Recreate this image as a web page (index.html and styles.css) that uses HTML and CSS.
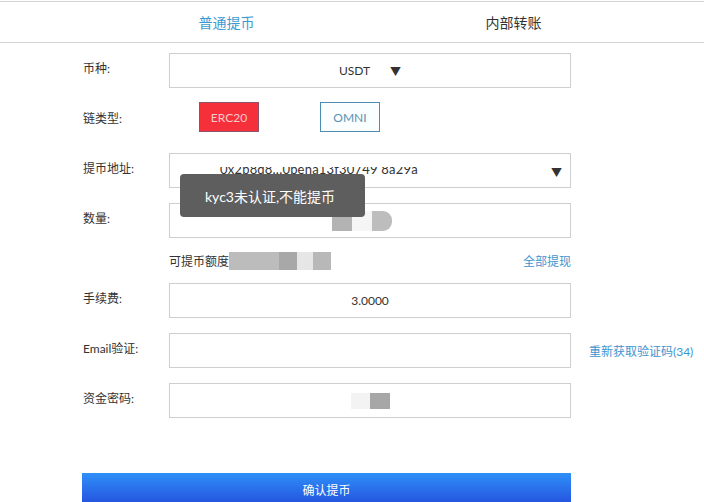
FILE: index.html
```html
<!DOCTYPE html>
<html lang="zh-CN">
<head>
<meta charset="utf-8">
<title>提币</title>
<link rel="stylesheet" href="styles.css">
</head>
<body>
<div class="tabs">
  <div class="tab active">普通提币</div>
  <div class="tab">内部转账</div>
</div>
<div class="form">
  <div class="row">
    <div class="label">币种:</div>
    <div class="field center">USDT<span class="caret">▼</span></div>
  </div>
  <div class="row chain">
    <div class="label">链类型:</div>
    <div class="chains">
      <span class="chip erc">ERC20</span>
      <span class="chip omni">OMNI</span>
    </div>
  </div>
  <div class="row">
    <div class="label">提币地址:</div>
    <div class="field addr">
      <span class="addr-text">0x2b8d8...0bena13f30749 8a29a</span>
      <span class="mask"></span>
      <span class="caret right">▼</span>
    </div>
    <div class="toast">kyc3未认证,不能提币</div>
  </div>
  <div class="row">
    <div class="label">数量:</div>
    <div class="field center"><span class="blk g1"></span><span class="blk w1"></span><span class="blk g2 round"></span></div>
  </div>
  <div class="avail">
    <div class="avail-left">可提币额度<span class="blk a1"></span><span class="blk a2"></span><span class="blk a3"></span><span class="blk a4"></span></div>
    <a class="link">全部提现</a>
  </div>
  <div class="row">
    <div class="label">手续费:</div>
    <div class="field center">3.0000</div>
  </div>
  <div class="row">
    <div class="label">Email验证:</div>
    <div class="field"></div>
    <a class="link side">重新获取验证码(34)</a>
  </div>
  <div class="row">
    <div class="label">资金密码:</div>
    <div class="field center"><span class="blk p1"></span><span class="blk p2"></span></div>
  </div>
  <button class="submit">确认提币</button>
</div>
</body>
</html>
```
FILE: styles.css
```css
* { box-sizing: border-box; }
html, body { margin: 0; padding: 0; background: #fff; }
body {
  font-family: Lato, "Noto Sans CJK SC", sans-serif;
  color: #333;
  font-size: 12px;
  overflow: hidden;
}
.tabs {
  margin-top: 1px;
  height: 42px;
  border-top: 1px solid #d4d4d4;
  border-bottom: 1px solid #d4d4d4;
  display: flex;
  padding-left: 83px;
}
.tab {
  width: 287px;
  display: flex;
  align-items: center;
  justify-content: center;
  font-size: 14px;
  color: #333;
}
.tab.active { color: #3d9ad1; }

.form {
  padding: 10px 0 0 83px;
  display: flex;
  flex-direction: column;
  gap: 15px;
}
.row {
  position: relative;
  display: flex;
  align-items: center;
  height: 35px;
}
.label {
  width: 86px;
  font-size: 12px;
  color: #333;
  margin-top: -6px;
}
.field {
  width: 402px;
  height: 35px;
  border: 1px solid #cfcfcf;
  display: flex;
  align-items: center;
  font-size: 12px;
  color: #333;
  position: relative;
}
.field.center { justify-content: center; }
.caret { margin-left: 20px; font-size: 11px; color: #333; }
.caret.right { position: absolute; right: 8px; top: 10px; margin: 0; }

.chain { align-items: flex-start; }
.chain .label { margin-top: 6px; }
.chains { display: flex; gap: 61px; padding-left: 30px; margin-top: -1px; }
.chip {
  width: 60px;
  height: 30px;
  display: flex;
  align-items: center;
  justify-content: center;
  font-size: 12px;
}
.erc { background: #f5303b; border: 1px solid #8c5468; color: #f6c9cc; }
.omni { background: #fbfeff; border: 1px solid #4d8db0; color: #5a93b3; }

.addr { padding-left: 50px; align-items: flex-end; padding-bottom: 10px; overflow: hidden; }
.addr-text { font-size: 13px; color: #333; letter-spacing: 0.2px; }
.mask {
  position: absolute;
  left: 40px;
  top: -2px;
  width: 300px;
  height: 15px;
  background: #fff;
}
.toast {
  position: absolute;
  left: 97px;
  top: 21px;
  width: 185px;
  height: 43px;
  background: #5e5e5e;
  border-radius: 4px;
  color: #fff;
  font-size: 14px;
  padding: 12px 0 0 25px;
  z-index: 2;
}

.blk { display: inline-block; height: 20px; }
.g1 { width: 20px; background: #b3b3b3; margin-left: -16px; }
.w1 { width: 20px; background: #f5f5f5; }
.g2 { width: 20px; background: #bdbdbd; }
.round { border-radius: 0 9px 9px 0; }

.avail {
  width: 488px;
  height: 15px;
  padding-left: 86px;
  display: flex;
  justify-content: space-between;
  align-items: center;
}
.avail-left { display: flex; align-items: center; }
.avail-left .blk { height: 18px; }
.a1 { width: 50px; background: #bcbcbc; }
.a2 { width: 18px; background: #a8a8a8; }
.a3 { width: 16px; background: #e6e6e6; }
.a4 { width: 18px; background: #b8b8b8; }
.link { color: #3d95d0; font-size: 12px; cursor: pointer; }
.link.side { margin-left: 18px; }

.p1 { width: 19px; height: 16px; background: #f3f3f3; }
.p2 { width: 20px; height: 16px; background: #a7a7a7; }

.submit {
  margin-top: 40px;
  margin-left: -1px;
  width: 489px;
  height: 32px;
  border: none;
  background: linear-gradient(#2f90f8, #2450de);
  color: #fff;
  font-family: "Noto Sans CJK SC", sans-serif;
  font-size: 12px;
  padding: 0;
}
```
